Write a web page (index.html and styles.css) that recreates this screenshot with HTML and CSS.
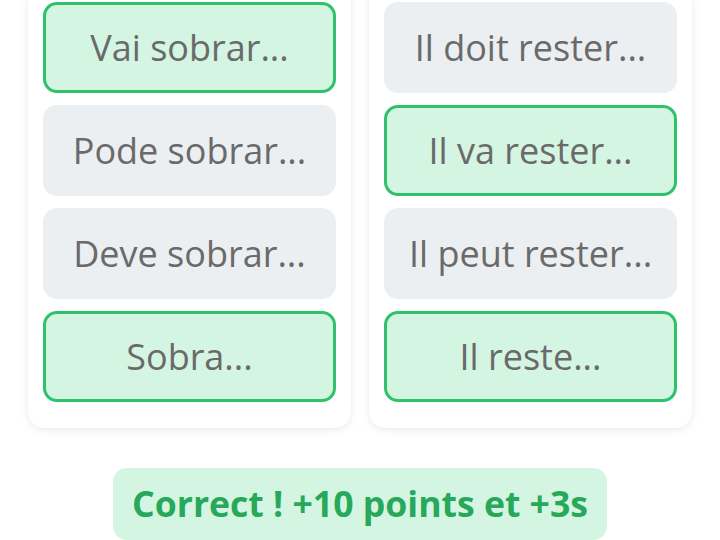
FILE: index.html
```html
<!DOCTYPE html>
<html lang="fr">
<head>
<meta charset="utf-8">
<link rel="stylesheet" href="styles.css">
</head>
<body>
<div class="board">
  <div class="card">
    <div class="opt ok">Vai sobrar...</div>
    <div class="opt">Pode sobrar...</div>
    <div class="opt">Deve sobrar...</div>
    <div class="opt ok">Sobra...</div>
  </div>
  <div class="card">
    <div class="opt">Il doit rester...</div>
    <div class="opt ok">Il va rester...</div>
    <div class="opt">Il peut rester...</div>
    <div class="opt ok">Il reste...</div>
  </div>
</div>
<div class="feedback">Correct ! +10 points et +3s</div>
</body>
</html>
```
FILE: styles.css
```css
html, body { margin: 0; padding: 0; background: #ffffff; }
body { font-family: "Open Sans", "Noto Sans", sans-serif; width: 720px; height: 540px; overflow: hidden; }
.board {
  display: grid;
  grid-template-columns: 323px 323px;
  gap: 18px;
  padding-left: 28px;
  margin-top: -13px;
}
.card {
  background: #fff;
  border-radius: 16px;
  box-shadow: 0 2px 8px rgba(0,0,0,0.08), 0 0 2px rgba(0,0,0,0.04);
  padding: 15px 15px 26px 15px;
  display: flex;
  flex-direction: column;
  gap: 12px;
}
.opt {
  height: 91px;
  box-sizing: border-box;
  border-radius: 14px;
  background: #eceff1;
  border: 3px solid transparent;
  display: flex;
  align-items: center;
  justify-content: center;
  font-size: 36px;
  color: #6a6a6a;
  padding-bottom: 1px;
}
.opt.ok {
  background: #d4f5e2;
  border-color: #2fc26a;
}
.feedback {
  width: 494px;
  height: 72px;
  margin: 40px auto 0;
  background: #d4f5e2;
  border-radius: 14px;
  display: flex;
  align-items: center;
  justify-content: center;
  font-weight: 700;
  font-size: 35.6px;
  color: #28a85b;
  padding-bottom: 2px;
  box-sizing: border-box;
}
```
